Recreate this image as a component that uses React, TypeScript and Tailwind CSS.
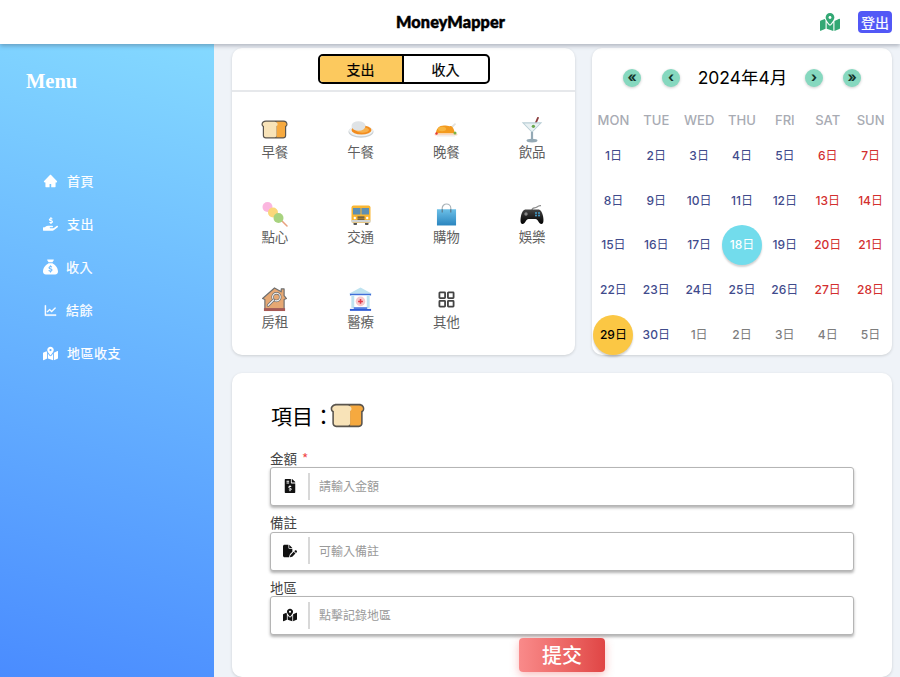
import type { ReactNode } from "react";
import { FaHandHoldingUsd, FaMapMarkedAlt, FaFileInvoiceDollar } from "react-icons/fa";
import { FaSackDollar, FaFilePen } from "react-icons/fa6";
import { AiFillHome, AiOutlineLineChart } from "react-icons/ai";

const cjk = "font-['Noto_Sans_CJK_TC','Noto_Sans',sans-serif]";

const Bread = ({ className = "w-[27px] h-[19px]" }: { className?: string }) => (
  <svg viewBox="0 0 27 19" className={className}>
    <path d="M5 .5h17.500c2.500 0 4 1.700 4 3.700 0 1.200-.5 2-1.300 2.600V15.500c0 1.800-1.200 3-3 3H4.800c-1.800 0-3-1.200-3-3V6.800C1 6.200.5 5.400.5 4.200.5 2.200 2.500.5 5 .5z" fill="#5a554e" />
    <path d="M15.500 1.700h6.800c2 0 3.100 1.100 3.100 2.500 0 1-.5 1.500-1.400 1.900v9.400c0 1-.7 1.700-1.700 1.700h-6.800z" fill="#f6a93f" />
    <path d="M5 1.700h8.500c1.800 0 3.100 1.100 3.100 2.500 0 1-.5 1.500-1.100 1.900v9.400c0 1-.6 1.700-1.600 1.700H4.800c-1 0-1.800-.7-1.800-1.700V6.100c-.8-.4-1.300-.9-1.300-1.900 0-1.400 1.500-2.500 3.300-2.500z" fill="#f8e3b8" />
  </svg>
);

const Rice = () => (
  <svg viewBox="0 0 26 17" className="w-[26px] h-[17px]">
    <ellipse cx="13" cy="10.800" rx="12.500" ry="6" fill="#c9cfd3" />
    <ellipse cx="13" cy="9.800" rx="12" ry="5.500" fill="#eef1f2" />
    <ellipse cx="13.500" cy="9" rx="10" ry="4.500" fill="#f28c1e" />
    <ellipse cx="14.500" cy="9" rx="6.500" ry="2.800" fill="#f7b04d" />
    <ellipse cx="10.500" cy="5" rx="7" ry="4.800" fill="#dfe3e6" />
  </svg>
);

const Turkey = () => (
  <svg viewBox="0 0 24 15" className="w-[24px] h-[15px]">
    <path d="M17 4.500L21 1l1 1.200-3.500 3.800z" fill="#e2e2de" />
    <path d="M2 11.500C2 7 5 3.500 10 3.500c3 0 5 1 7 .5 2 1 3.500 3.500 3.500 7.500z" fill="#f39a1f" />
    <ellipse cx="8" cy="7" rx="4" ry="2.200" fill="#f7b53f" />
    <rect x="0.500" y="11.500" width="23" height="2" rx="1" fill="#f9d9c4" />
    <circle cx="21" cy="11" r="1.500" fill="#7cb342" />
    <circle cx="2.500" cy="11.500" r="1.200" fill="#e53935" />
    <rect x="3" y="13.500" width="18" height="1" fill="#e9e9e9" />
  </svg>
);

const Cocktail = () => (
  <svg viewBox="0 0 24 28" className="w-[22px] h-[26px]">
    <path d="M14 11L18.500.8" stroke="#8a3b3b" strokeWidth="2" strokeLinecap="round" />
    <path d="M.8 5.500h22.400L12 17z" fill="#b9ced6" />
    <path d="M3.500 7h17L12 15.500z" fill="#e9f1f3" />
    <circle cx="13.500" cy="10" r="1.800" fill="#6aa84f" />
    <rect x="10.800" y="16" width="2.400" height="9" fill="#94a9b5" />
    <ellipse cx="12" cy="25.500" rx="6" ry="2" fill="#94a9b5" />
  </svg>
);

const Dango = () => (
  <svg viewBox="0 0 26 25" className="w-[26px] h-[25px]">
    <path d="M14 13l11 11" stroke="#e8a27f" strokeWidth="1.500" strokeLinecap="round" />
    <circle cx="5.500" cy="5" r="5" fill="#fbb6df" />
    <circle cx="11" cy="10.500" r="5" fill="#fbd77b" />
    <circle cx="16.500" cy="16" r="5" fill="#a8d37f" />
  </svg>
);

const Bus = () => (
  <svg viewBox="0 0 20 20" className="w-[20px] h-[20px]">
    <rect x="2.500" y="16.500" width="3.500" height="3.500" rx=".8" fill="#555" />
    <rect x="14" y="16.500" width="3.500" height="3.500" rx=".8" fill="#555" />
    <rect x=".5" y="0.500" width="19" height="17.500" rx="2" fill="#f9b632" />
    <rect x="2" y="3" width="7.500" height="6.500" fill="#5d8fb3" />
    <rect x="10.500" y="3" width="7.500" height="6.500" fill="#5d8fb3" />
    <rect x=".5" y="15" width="19" height="2.500" fill="#cfd4d6" />
    <rect x="6.500" y="11.500" width="7" height="1.200" fill="#444" />
    <rect x="6.500" y="13.500" width="7" height="1.200" fill="#444" />
    <circle cx="3.800" cy="13" r="1.200" fill="#fff" />
    <circle cx="16.200" cy="13" r="1.200" fill="#fff" />
  </svg>
);

const Bag = () => (
  <svg viewBox="0 0 22 24" className="w-[21px] h-[23px]">
    <defs>
      <linearGradient id="bagFill" x1="0" y1="0" x2="0" y2="1">
        <stop offset="0" stopColor="#6cc0e8" />
        <stop offset="1" stopColor="#2a85bf" />
      </linearGradient>
    </defs>
    <path d="M6.500 10V5.500a4.500 4.500 0 0 1 9 0V10" fill="none" stroke="#a9b3b9" strokeWidth="1.200" />
    <rect x="1" y="6.500" width="20" height="17" fill="url(#bagFill)" />
    <path d="M6.500 6.500V10M15.500 6.500V10" stroke="#5c7787" strokeWidth="1.200" />
  </svg>
);

const Pad = () => (
  <svg viewBox="0 0 24 20" className="w-[24px] h-[20px]">
    <defs>
      <linearGradient id="padFill" x1="0" y1="0" x2="0" y2="1">
        <stop offset="0" stopColor="#444" />
        <stop offset="1" stopColor="#000" />
      </linearGradient>
    </defs>
    <path d="M12 5c0-3 3-1.500 5-3S20 .8 21 .6" fill="none" stroke="#8c8c8c" strokeWidth="1.200" />
    <path d="M6 4.500h12c2.800 0 4 2.500 5 6.500.8 4 .8 8-1.500 8-2.800 0-3.500-5-6-5H8.500c-2.500 0-3.200 5-6 5C.2 19 .2 15 1 11c1-4 2.200-6.500 5-6.500z" fill="url(#padFill)" />
    <circle cx="6" cy="9" r="1.700" fill="#888" />
    <circle cx="16" cy="8" r=".9" fill="#46a9dc" />
    <circle cx="19" cy="8" r=".9" fill="#46a9dc" />
    <circle cx="16" cy="10.500" r=".9" fill="#46a9dc" />
    <circle cx="19" cy="10.500" r=".9" fill="#46a9dc" />
  </svg>
);

const HouseKey = () => (
  <svg viewBox="0 0 26 26" className="w-[25px] h-[25px]">
    <path d="M13 1L20 5V2h3v7l2.500 3-2.500 1v10H3V13L.6 12z" fill="#e6a873" stroke="#6e6e6e" strokeWidth="1.200" strokeLinejoin="round" />
    <rect x="2" y="22" width="22" height="3" fill="#a85a55" />
    <circle cx="15" cy="10.500" r="4" fill="none" stroke="#6e6e6e" strokeWidth="2.600" />
    <circle cx="15" cy="10.500" r="4" fill="none" stroke="#f1f1f1" strokeWidth="1.200" />
    <path d="M12 13.500L6.500 19" stroke="#6e6e6e" strokeWidth="3" strokeLinecap="round" />
    <path d="M12 13.500L6.500 19" stroke="#f1f1f1" strokeWidth="1.400" strokeLinecap="round" />
  </svg>
);

const Hospital = () => (
  <svg viewBox="0 0 26 26" className="w-[25px] h-[25px]">
    <path d="M13 .6L25 7H1z" fill="#bfe3f0" />
    <rect x="2" y="7" width="22" height="1.800" fill="#3f6fd8" />
    <rect x="3.500" y="8.800" width="19" height="13" fill="#fff" />
    <rect x="3.500" y="8.800" width="3" height="13" fill="#bfe3f0" />
    <rect x="19.500" y="8.800" width="3" height="13" fill="#bfe3f0" />
    <circle cx="13" cy="15" r="5" fill="#f6c9cc" />
    <path d="M13 12.500v5M10.500 15h5" stroke="#e23b4b" strokeWidth="1.600" />
    <rect x="6" y="21" width="14" height="1.800" fill="#4e7be0" />
    <rect x="2" y="22.800" width="22" height="2" fill="#2f5cd6" />
  </svg>
);

const Grid = () => (
  <svg viewBox="0 0 18 18" className="w-[17px] h-[17px]" fill="none" stroke="#444" strokeWidth="1.900">
    <rect x="1.500" y="1.500" width="6" height="6" rx=".6" />
    <rect x="10.500" y="1.500" width="6" height="6" rx=".6" />
    <rect x="1.500" y="10.500" width="6" height="6" rx=".6" />
    <rect x="10.500" y="10.500" width="6" height="6" rx=".6" />
  </svg>
);

const categories: [ReactNode, string][] = [
  [<Bread />, "早餐"],
  [<Rice />, "午餐"],
  [<Turkey />, "晚餐"],
  [<Cocktail />, "飲品"],
  [<Dango />, "點心"],
  [<Bus />, "交通"],
  [<Bag />, "購物"],
  [<Pad />, "娛樂"],
  [<HouseKey />, "房租"],
  [<Hospital />, "醫療"],
  [<Grid />, "其他"],
];

const nav: [ReactNode, string, string][] = [
  [<AiFillHome size={18} />, "首頁", "ml-[9px]"],
  [<FaHandHoldingUsd size={16} />, "支出", "ml-[9px]"],
  [<FaSackDollar size={16} />, "收入", "ml-[8px]"],
  [<AiOutlineLineChart size={19} stroke="currentColor" strokeWidth={24} />, "結餘", "ml-[8px]"],
  [<FaMapMarkedAlt size={17} />, "地區收支", "ml-[9px]"],
];

const days = [
  "1", "2", "3", "4", "5", "6", "7", "8", "9", "10", "11", "12", "13", "14", "15", "16", "17", "18", "19", "20", "21",
  "22", "23", "24", "25", "26", "27", "28", "29", "30", "1", "2", "3", "4", "5",
];

const week = ["MON", "TUE", "WED", "THU", "FRI", "SAT", "SUN"];

function dayClass(i: number) {
  if (i === 17) return "bg-[#72dcec] text-white shadow-[0_2px_2px_rgba(0,0,0,0.18)]";
  if (i === 28) return "bg-[#fbc744] text-black shadow-[0_2px_2px_rgba(0,0,0,0.18)]";
  if (i > 29) return "text-[#7d7d7d]";
  if (i % 7 >= 5) return "text-[#d32f2f]";
  return "text-[#3f4b8c]";
}

const NavButton = ({ label }: { label: string }) => (
  <span className="flex h-[18px] w-[18px] items-center justify-center rounded-full bg-[#86d8bf] pb-[2px] text-[14px] font-bold leading-none text-[#14332a] shadow-[0_1px_3px_rgba(0,0,0,0.2)]">
    {label}
  </span>
);

const Field = ({ label, required, icon, hint }: { label: string; required?: boolean; icon: ReactNode; hint: string }) => (
  <div>
    <div className="h-[19.500px] pt-[1px] text-[13.500px] leading-[18px] text-[#444]">
      {label}
      {required && <span className="ml-[5px] text-[#ef4444]">*</span>}
    </div>
    <div className="flex h-[39px] items-center rounded-[3px] border border-[#b5b5b5] bg-white pb-[1px] shadow-[0_2px_3px_rgba(0,0,0,0.3)]">
      <span className="flex w-[37px] justify-center text-[#111]">{icon}</span>
      <span className="h-[27px] w-[2px] bg-[#d8d8d8]" />
      <span className="ml-[9px] text-[12px] text-[#9a9a9a]">{hint}</span>
    </div>
  </div>
);

export default function App() {
  return (
    <div className={`flex h-[677px] w-[900px] flex-col overflow-hidden bg-[#eff3f8] ${cjk}`}>
      {/* Header */}
      <header className="relative z-10 flex h-[44px] shrink-0 items-center justify-end bg-white pr-[8px] shadow-[0_2px_4px_rgba(60,70,90,0.35)]">
        <span className="absolute left-[396px] top-[11px] font-['Lato',sans-serif] text-[16.300px] font-black leading-[22px] tracking-[0.1px] text-black [-webkit-text-stroke:0.5px_black]">
          MoneyMapper
        </span>
        <FaMapMarkedAlt size={20} className="mr-[18px] text-[#33a874]" />
        <button className="h-[22px] w-[34px] rounded-[4px] bg-[#5258f6] text-[14px] leading-[21px] text-white [-webkit-text-stroke:0.2px_white]">
          登出
        </button>
      </header>

      <div className="flex min-h-0 flex-1">
        {/* Sidebar */}
        <aside className="w-[214px] shrink-0 bg-[linear-gradient(15deg,#4a8cff,#84d9ff)] text-white">
          <div className="pl-[26px] pt-[24px] font-['Liberation_Serif',serif] text-[20.500px] font-bold leading-[26px]">
            Menu
          </div>
          <nav className="mt-[77px] flex flex-col gap-[23px] pl-[43px]">
            {nav.map(([icon, label, gap]) => (
              <div key={label} className="flex h-[20px] items-center text-[13px] tracking-[0.5px] [-webkit-text-stroke:0.2px_white]">
                <span className="flex w-[15px] justify-center">{icon}</span>
                <span className={gap}>{label}</span>
              </div>
            ))}
          </nav>
        </aside>

        {/* Main */}
        <main className="flex min-w-0 flex-1 flex-col gap-[18px] pl-[18px] pr-[8px] pt-[4px]">
          <div className="flex h-[307px] shrink-0 gap-[17px]">
            {/* Categories */}
            <section className="w-[343px] rounded-[10px] bg-white shadow-[0_1px_3px_rgba(0,0,0,0.15)]">
              <div className="flex h-[44px] justify-center border-b-2 border-[#e6e8eb] pt-[6px]">
                <div className="flex h-[30px] w-[172px] overflow-hidden rounded-[5px] border-2 border-black text-[14px] leading-[26px] text-black [-webkit-text-stroke:0.2px_black]">
                  <span className="w-[84px] border-r-2 border-black bg-[#fcc95e] text-center">支出</span>
                  <span className="flex-1 text-center">收入</span>
                </div>
              </div>
              <div className="grid grid-cols-4 grid-rows-[85px_85px_85px] pt-[25px]">
                {categories.map(([icon, label]) => (
                  <div key={label} className="flex flex-col items-center text-[13.500px] leading-[18px] text-[#5f5f5f]">
                    <span className="flex h-[25px] items-center justify-center">{icon}</span>
                    <span>{label}</span>
                  </div>
                ))}
              </div>
            </section>

            {/* Calendar */}
            <section className="w-[300px] rounded-[10px] bg-white shadow-[0_1px_3px_rgba(0,0,0,0.15)] font-['Inter','Noto_Sans_CJK_TC',sans-serif]">
              <div className="flex h-[60px] items-center pl-[31px] pr-[31px]">
                <NavButton label="«" />
                <span className="ml-[21px]"><NavButton label="‹" /></span>
                <span className="flex-1 text-center text-[17.500px] text-black">2024年4月</span>
                <span className="mr-[20px]"><NavButton label="›" /></span>
                <NavButton label="»" />
              </div>
              <div className="grid grid-cols-7 text-center text-[13px] font-medium leading-[24px] text-[#a8abb3]">
                {week.map((w) => (
                  <span key={w}>{w}</span>
                ))}
              </div>
              <div className="mt-[2px] grid grid-cols-7 grid-rows-[repeat(5,44.600px)]">
                {days.map((d, i) => (
                  <div key={i} className="flex items-center justify-center">
                    <span className={`flex h-[40px] w-[40px] items-center justify-center rounded-full text-[12px] ${dayClass(i)}`}>
                      <span className="font-medium">{d}</span>日
                    </span>
                  </div>
                ))}
              </div>
            </section>
          </div>

          {/* Form */}
          <section className="relative flex-1 rounded-[10px] bg-white pl-[38px] pr-[38px] pt-[27px] shadow-[0_1px_3px_rgba(0,0,0,0.15)]">
            <div className="flex h-[30px] items-center text-[21px] leading-[30px] text-black">
              <span className="ml-[1px]">項目：</span>
              <span className="-ml-[4px]"><Bread className="h-[25px] w-[35px]" /></span>
            </div>
            <div className="mt-[17.500px] flex flex-col gap-[6px]">
              <Field label="金額" required icon={<FaFileInvoiceDollar size={14} />} hint="請輸入金額" />
              <Field label="備註" icon={<FaFilePen size={14} />} hint="可輸入備註" />
              <Field label="地區" icon={<FaMapMarkedAlt size={14} />} hint="點擊記錄地區" />
            </div>
            <button className="absolute left-[287px] top-[265px] h-[34px] w-[86px] rounded-[4px] bg-linear-to-r from-[#f98a8a] to-[#e04545] text-[20px] font-medium leading-[34px] text-white shadow-[0_3px_10px_rgba(239,68,68,0.35)]">
              提交
            </button>
          </section>
        </main>
      </div>
    </div>
  );
}
